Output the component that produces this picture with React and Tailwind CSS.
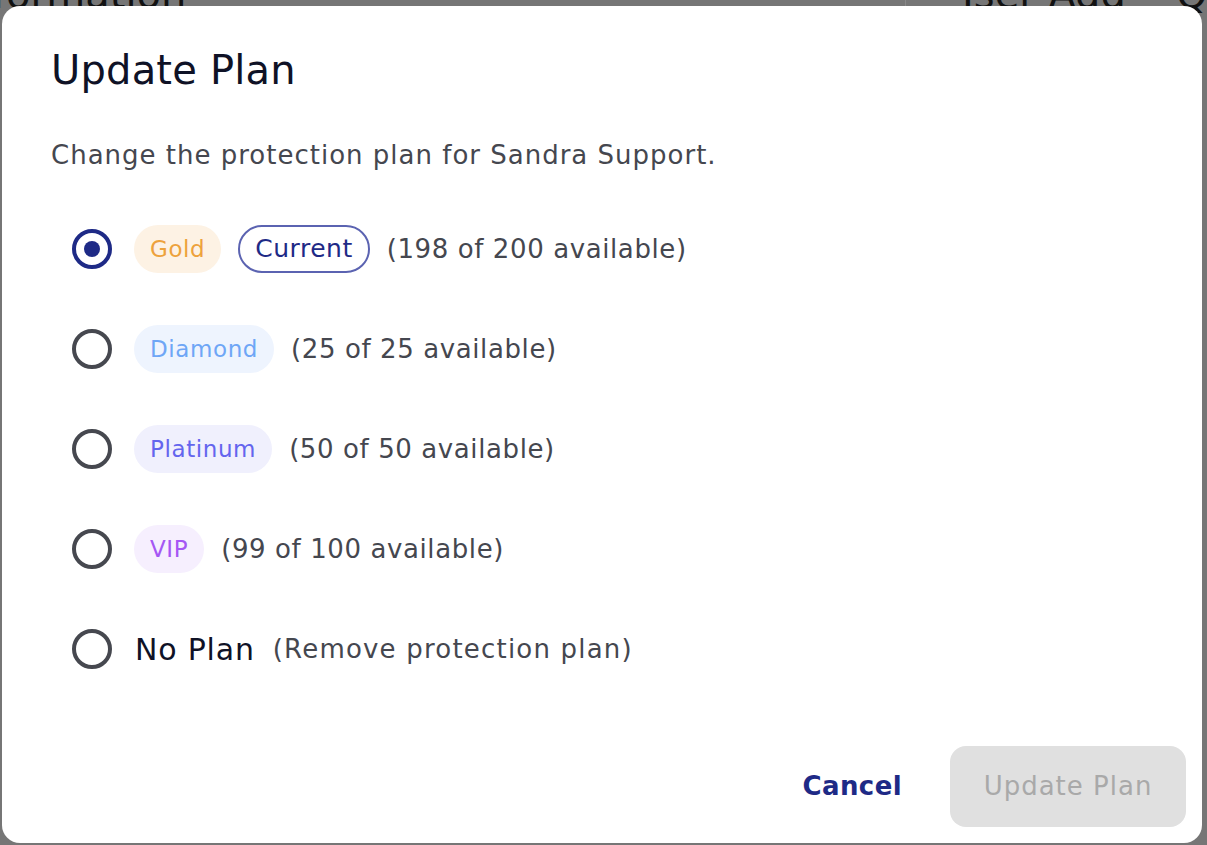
import { useState } from 'react';

const plans = [
  { id: 'gold', label: 'Gold', badge: 'bg-[#fdf2e4] text-[#eda23c]', current: true, info: '(198 of 200 available)' },
  { id: 'diamond', label: 'Diamond', badge: 'bg-[#eef4fe] text-[#6ea6f6]', info: '(25 of 25 available)' },
  { id: 'platinum', label: 'Platinum', badge: 'bg-[#f0f0fd] text-[#6465ee]', info: '(50 of 50 available)' },
  { id: 'vip', label: 'VIP', badge: 'bg-[#f6effe] text-[#a557f4]', info: '(99 of 100 available)' },
];

function Radio({ checked }) {
  return (
    <span
      className={`w-10 h-10 rounded-full border-4 flex items-center justify-center shrink-0 ${
        checked ? 'border-[#1e2a86]' : 'border-[#46484f]'
      }`}
    >
      {checked && <span className="w-4 h-4 rounded-full bg-[#1e2a86]"></span>}
    </span>
  );
}

export default function App() {
  const [selected, setSelected] = useState('gold');

  return (
    <div
      className="relative w-[1207px] h-[845px] overflow-hidden bg-[#767676]"
      style={{ fontFamily: '"DejaVu Sans", "Open Sans", sans-serif' }}
    >
      {/* page behind the overlay */}
      <div className="absolute inset-0 text-[#111] text-[40px] leading-none">
        <span className="absolute left-[-8px] top-[-26px]">formation</span>
        <span className="absolute left-[962px] top-[-26px]">Jser Add</span>
        <span className="absolute left-[1176px] top-[-26px]">Q</span>
        <span className="absolute left-[905px] top-0 w-px h-[8px] bg-[#888]"></span>
      </div>

      <div className="absolute left-[2px] top-[6px] w-[1200px] h-[837px] bg-white rounded-[18px] flex flex-col">
        <div className="px-[49px] pt-[40px]">
          <h2 className="text-[40px] leading-[48px] tracking-[0.2px] text-[#0f1226]">Update Plan</h2>
          <p className="mt-[43px] text-[26px] leading-[36px] tracking-[1px] text-[#45474f]">
            Change the protection plan for Sandra Support.
          </p>

          <div className="mt-[26px] flex flex-col pl-[21px]">
            {plans.map((plan) => (
              <label key={plan.id} className="h-[100px] flex items-center cursor-pointer" onClick={() => setSelected(plan.id)}>
                <Radio checked={selected === plan.id} />
                <span className={`ml-[22px] h-[48px] px-[16px] rounded-full flex items-center text-[23px] tracking-[0.6px] ${plan.badge}`}>
                  {plan.label}
                </span>
                {plan.current && (
                  <span className="ml-[17px] h-[48px] px-[15px] rounded-full border-2 border-[#5b63b1] flex items-center text-[25px] tracking-[0.5px] text-[#1e2a86]">
                    Current
                  </span>
                )}
                <span className="ml-[17px] text-[26px] tracking-[0.6px] text-[#45474f]">{plan.info}</span>
              </label>
            ))}
            <label className="h-[100px] flex items-center cursor-pointer" onClick={() => setSelected('none')}>
              <Radio checked={selected === 'none'} />
              <span className="ml-[23px] text-[30px] tracking-[0.8px] text-[#0f1226]">No Plan</span>
              <span className="ml-[18px] text-[26px] tracking-[1.2px] text-[#45474f]">(Remove protection plan)</span>
            </label>
          </div>
        </div>

        <div className="mt-auto flex items-center justify-end gap-[24px] p-[16px]">
          <button className="px-[24px] h-[81px] text-[26px] tracking-[0.4px] font-semibold text-[#1e2a86]">Cancel</button>
          <button disabled className="w-[236px] h-[81px] rounded-[16px] bg-[#e0e0e0] text-[26px] tracking-[1px] text-[#a9a9a9]">
            Update Plan
          </button>
        </div>
      </div>
    </div>
  );
}
